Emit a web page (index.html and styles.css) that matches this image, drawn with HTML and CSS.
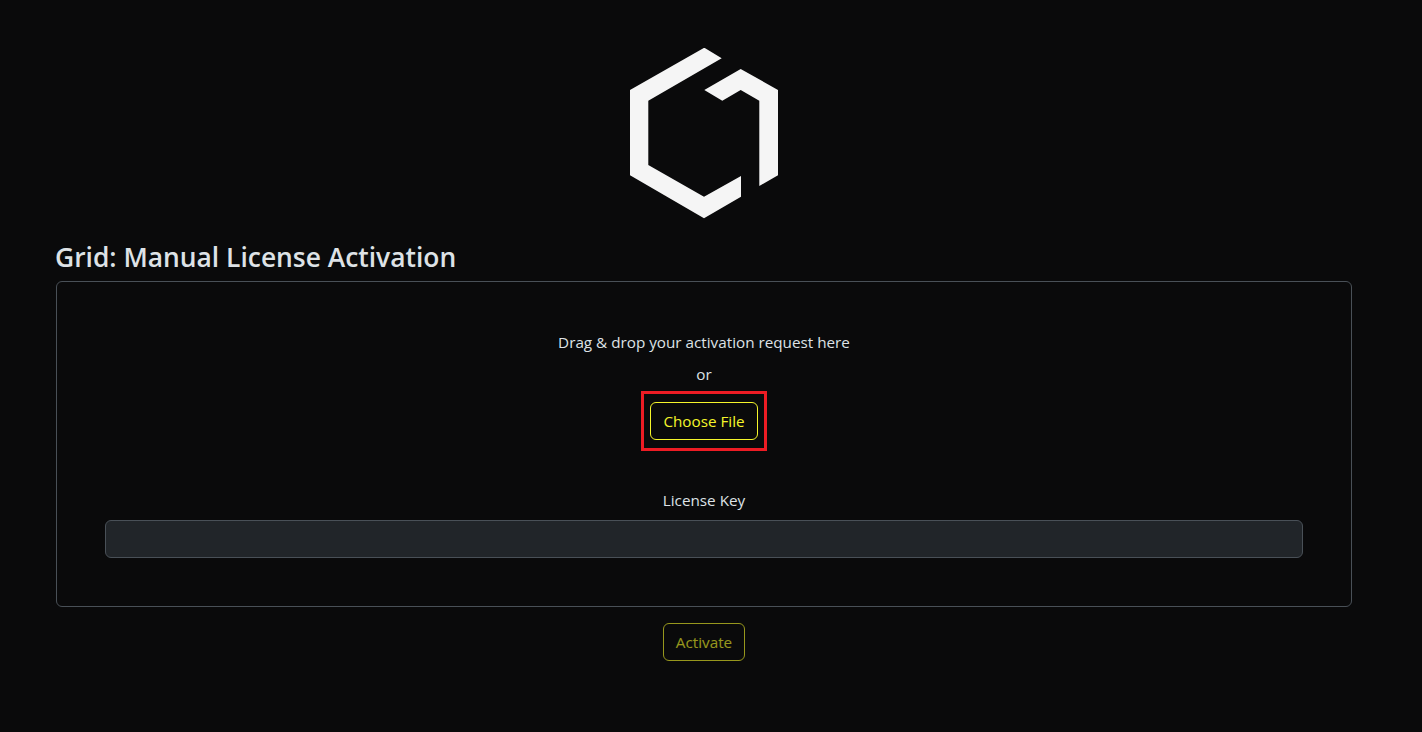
FILE: index.html
```html
<!DOCTYPE html>
<html>
<head>
    <meta charset="UTF-8">
    <title>Grid: Manual License Activation</title>
    <link rel="stylesheet" href="styles.css">
</head>
<body>
    <div class="container">
        <div class="logo-row">
            <svg class="logo" width="148" height="171" viewBox="630 48 148 171">
                <path d="M704.3 47.7L721.7 58.3L648.3 100.7V165L704 196.7L741 176V196.7L704 218.3L630 175.3V90Z"/>
                <path d="M740.7 69L778 90V175.3L759.3 186V100.7L740.7 90L722.3 100.7L704.3 90Z"/>
            </svg>
        </div>
        <h3 class="page-title">Grid: Manual License Activation</h3>
        <div class="activation-box">
            <p class="line">Drag &amp; drop your activation request here</p>
            <p class="line">or</p>
            <div class="file-row">
                <div class="file-wrap">
                    <button class="btn-yellow">Choose File</button>
                    <span class="highlight"></span>
                </div>
            </div>
            <label class="key-label" for="license-key">License Key</label>
            <input id="license-key" class="key-input" type="text">
        </div>
        <div class="activate-row">
            <button class="btn-yellow" disabled>Activate</button>
        </div>
    </div>
</body>
</html>
```

FILE: styles.css
```css
* {
    box-sizing: border-box;
}

body {
    margin: 0;
    background-color: #0a0a0b;
    color: #dee2e6;
    font-family: "Open Sans", "Noto Sans", sans-serif;
    font-size: 15.25px;
    line-height: 24px;
}

.logo-row {
    display: flex;
    justify-content: center;
    height: 240px;
    padding-top: 48px;
}

.logo {
    display: block;
    fill: #f5f5f5;
}

.container {
    width: 1296px;
    margin-left: 56px;
}

.page-title {
    margin: 0 0 7px -1px;
    font-size: 26.4px;
    font-weight: 600;
    line-height: 34px;
}

.activation-box {
    display: flex;
    flex-direction: column;
    align-items: center;
    padding: 48px;
    border: 1px solid #495057;
    border-radius: 6px;
}

.line {
    margin: 0 0 8px;
}

.file-row {
    margin-top: 8px;
    margin-bottom: 48px;
}

.file-wrap {
    position: relative;
}

.highlight {
    position: absolute;
    top: -11px;
    right: -9px;
    bottom: -11px;
    left: -9px;
    border: 3px solid #ed1c24;
}

.btn-yellow {
    display: block;
    height: 38px;
    padding: 0 12px;
    background-color: transparent;
    border: 1px solid #f5f52a;
    border-radius: 6px;
    color: #f5f52a;
    font-family: inherit;
    font-size: 15.25px;
}

.btn-yellow:disabled {
    opacity: 0.6;
}

.key-label {
    margin-bottom: 8px;
}

.key-input {
    width: 100%;
    height: 38px;
    background-color: #212529;
    border: 1px solid #495057;
    border-radius: 6px;
}

.activate-row {
    display: flex;
    justify-content: center;
    margin-top: 16px;
}
```
